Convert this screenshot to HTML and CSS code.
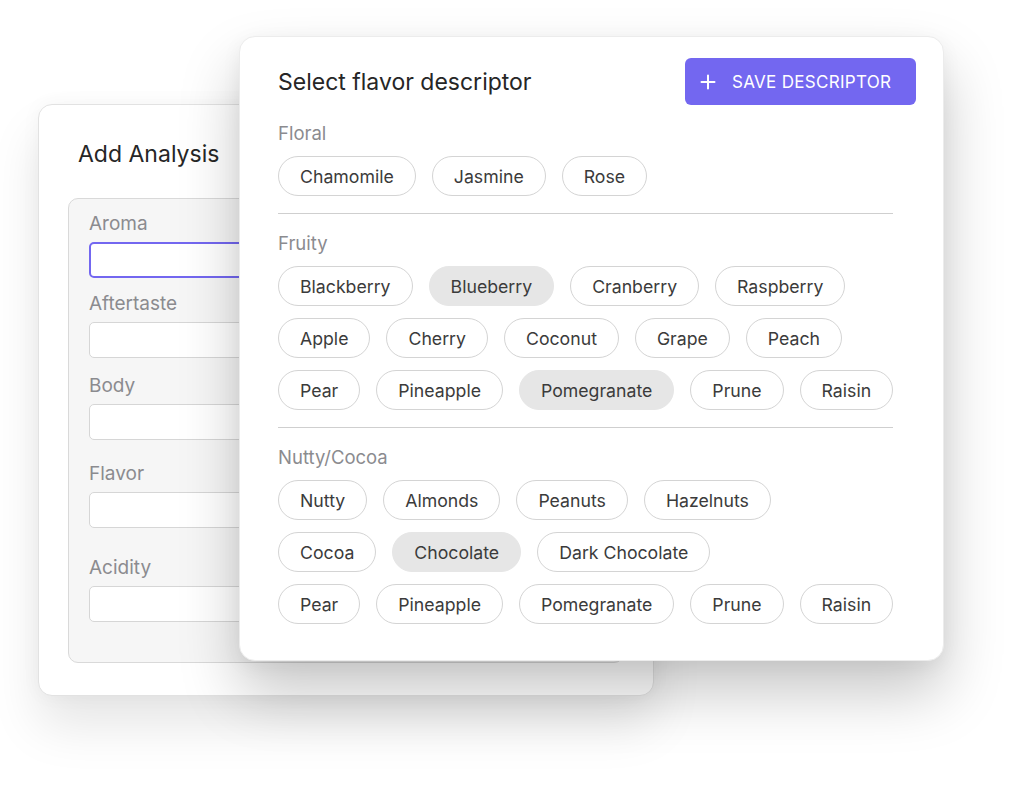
FILE: index.html
```html
<!DOCTYPE html>
<html lang="en">
<head>
  <meta charset="UTF-8" />
  <meta name="viewport" content="width=device-width, initial-scale=1" />
  <title>Select flavor descriptor</title>
  <link rel="stylesheet" href="styles.css">
</head>
<body>
  <div class="stage">
    <div class="analysis">
      <h2 class="analysis-title">Add Analysis</h2>
      <div class="panel">
        <div class="field">
          <label>Aroma</label>
          <div class="input active"></div>
        </div>
        <div class="field f-after">
          <label>Aftertaste</label>
          <div class="input"></div>
        </div>
        <div class="field f-body">
          <label>Body</label>
          <div class="input"></div>
        </div>
        <div class="field f-flavor">
          <label>Flavor</label>
          <div class="input"></div>
        </div>
        <div class="field f-acidity">
          <label>Acidity</label>
          <div class="input"></div>
        </div>
      </div>
    </div>

    <div class="picker">
      <div class="picker-head">
        <h2 class="picker-title">Select flavor descriptor</h2>
        <button type="button" class="save">
          <svg width="16" height="16" viewBox="0 0 16 16" aria-hidden="true">
            <path d="M8 1.5v13M1.5 8h13" stroke="#fff" stroke-width="2" stroke-linecap="round" fill="none"/>
          </svg>
          SAVE DESCRIPTOR
        </button>
      </div>

      <div class="group">
        <div class="group-name">Floral</div>
        <div class="chip-rows">
          <div class="chips">
            <span class="chip">Chamomile</span>
            <span class="chip">Jasmine</span>
            <span class="chip">Rose</span>
          </div>
        </div>
      </div>

      <div class="group">
        <div class="group-name">Fruity</div>
        <div class="chip-rows">
          <div class="chips">
            <span class="chip">Blackberry</span>
            <span class="chip on">Blueberry</span>
            <span class="chip">Cranberry</span>
            <span class="chip">Raspberry</span>
          </div>
          <div class="chips">
            <span class="chip">Apple</span>
            <span class="chip">Cherry</span>
            <span class="chip">Coconut</span>
            <span class="chip">Grape</span>
            <span class="chip">Peach</span>
          </div>
          <div class="chips">
            <span class="chip">Pear</span>
            <span class="chip">Pineapple</span>
            <span class="chip on">Pomegranate</span>
            <span class="chip">Prune</span>
            <span class="chip">Raisin</span>
          </div>
        </div>
      </div>

      <div class="group last">
        <div class="group-name">Nutty/Cocoa</div>
        <div class="chip-rows">
          <div class="chips">
            <span class="chip">Nutty</span>
            <span class="chip">Almonds</span>
            <span class="chip">Peanuts</span>
            <span class="chip">Hazelnuts</span>
          </div>
          <div class="chips">
            <span class="chip">Cocoa</span>
            <span class="chip on">Chocolate</span>
            <span class="chip">Dark Chocolate</span>
          </div>
          <div class="chips">
            <span class="chip">Pear</span>
            <span class="chip">Pineapple</span>
            <span class="chip">Pomegranate</span>
            <span class="chip">Prune</span>
            <span class="chip">Raisin</span>
          </div>
        </div>
      </div>
    </div>
  </div>
</body>
</html>
```

FILE: styles.css
```css
* {
  box-sizing: border-box;
}

body {
  margin: 0;
  background: #fff;
  font-family: Inter, "Noto Sans", sans-serif;
  color: #2b2b2b;
}

.stage {
  position: relative;
  width: 1024px;
  height: 785px;
  overflow: hidden;
  padding: 104px 0 0 38px;
}

/* back card */
.analysis {
  width: 616px;
  height: 592px;
  background: #fff;
  border: 1px solid #e2e2e2;
  border-radius: 14px;
  padding: 36px 29px 33px;
  box-shadow: 0 30px 50px rgba(0, 0, 0, 0.10), 0 0 20px rgba(0, 0, 0, 0.04);
}

.analysis-title {
  margin: 0 0 30px 10px;
  font-size: 23px;
  line-height: 27px;
  font-weight: 400;
  color: #262626;
}

.panel {
  height: 465px;
  background: #f6f6f6;
  border: 1px solid #d9d9d9;
  border-radius: 10px;
  padding: 14px 20px 0;
}

.field label {
  display: block;
  font-size: 19px;
  line-height: 22px;
  color: #8b8b8f;
  margin-bottom: 7px;
}

.f-after { margin-top: 15px; }
.f-body { margin-top: 17px; }
.f-flavor { margin-top: 23px; }
.f-acidity { margin-top: 29px; }

.input {
  height: 36px;
  background: #fff;
  border: 1px solid #d6d6d6;
  border-radius: 5px;
}

.input.active {
  border: 2px solid #7367f0;
}

/* front card */
.picker {
  position: absolute;
  left: 239px;
  top: 36px;
  width: 705px;
  height: 625px;
  background: #fff;
  border: 1px solid #ececec;
  border-radius: 16px;
  padding: 21px 27px 0 38px;
  box-shadow: 0 32px 60px rgba(0, 0, 0, 0.22), 0 5px 20px rgba(0, 0, 0, 0.05);
}

.picker-head {
  display: flex;
  justify-content: space-between;
  align-items: center;
  margin-bottom: 17px;
}

.picker-title {
  margin: 0;
  font-size: 23px;
  line-height: 27px;
  font-weight: 400;
  color: #262626;
  position: relative;
  top: 1px;
}

.save {
  display: flex;
  align-items: center;
  gap: 16px;
  width: 231px;
  height: 47px;
  padding: 0 0 0 15px;
  border: none;
  border-radius: 6px;
  background: #7367f0;
  color: #fff;
  font-family: inherit;
  font-size: 17px;
  letter-spacing: 0.3px;
  cursor: pointer;
}

.group {
  width: 615px;
  border-bottom: 1px solid #cfcfcf;
  padding-bottom: 17px;
  margin-bottom: 18px;
}

.group.last {
  border-bottom: none;
}

.group-name {
  font-size: 18.5px;
  line-height: 22px;
  color: #8b8b8f;
  margin-bottom: 12px;
}

.chip-rows {
  display: flex;
  flex-direction: column;
  gap: 12px;
}

.chips {
  display: flex;
  gap: 16px;
}

.chip {
  height: 40px;
  padding: 0 21px;
  display: inline-flex;
  align-items: center;
  white-space: nowrap;
  border: 1px solid #d4d4d4;
  border-radius: 20px;
  font-size: 17.7px;
  color: #3b3b3b;
}

.chip.on {
  background: #e6e6e6;
  border-color: #e6e6e6;
}
```
